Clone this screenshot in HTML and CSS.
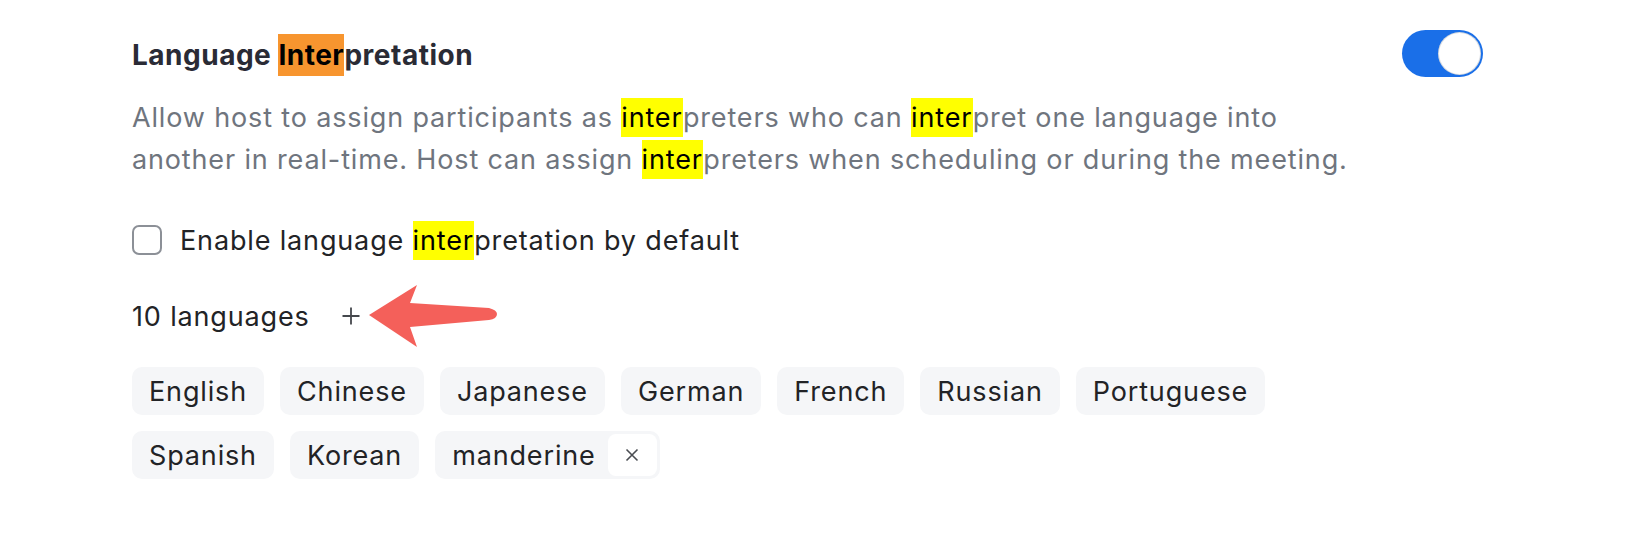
FILE: index.html
```html
<!DOCTYPE html>
<html lang="en">
<head>
<meta charset="utf-8">
<title>Language Interpretation</title>
<link rel="stylesheet" href="styles.css">
</head>
<body>
<section class="setting">
  <div class="setting-head">
    <div class="setting-main">
      <h3 class="title">Language <mark class="hl-orange">Inter</mark>pretation</h3>
      <p class="desc">Allow host to assign participants as <mark class="hl">inter</mark>preters who can <mark class="hl">inter</mark>pret one language into another in real-time. Host can assign <mark class="hl">inter</mark>preters when scheduling or during the meeting.</p>
    </div>
    <button class="toggle" aria-pressed="true"><span class="knob"></span></button>
  </div>

  <label class="check-row"><span class="checkbox"></span><span>Enable language <mark class="hl">inter</mark>pretation by default</span></label>

  <div class="lang-count">
    <span>10 languages</span>
    <span class="plus">
      <svg width="20" height="20" viewBox="0 0 20 20"><path d="M10 1.5v17M1.5 10h17" stroke="#45484d" stroke-width="1.8" fill="none"/></svg>
    </span>
    <svg class="arrow" width="140" height="70" viewBox="0 0 140 70">
      <path d="M4 33 L52 3 L45 21 L124 26 Q132 28 132 32 Q132 37 124 38 L45 45 L52 65 Z" fill="#f4605a"/>
    </svg>
  </div>

  <div class="tags">
    <span class="tag">English</span>
    <span class="tag">Chinese</span>
    <span class="tag">Japanese</span>
    <span class="tag">German</span>
    <span class="tag">French</span>
    <span class="tag">Russian</span>
    <span class="tag">Portuguese</span>
    <span class="tag">Spanish</span>
    <span class="tag">Korean</span>
    <span class="tag tag-removable">manderine<span class="tag-x"><svg width="16" height="16" viewBox="0 0 16 16"><path d="M2.5 2.5l11 11M13.5 2.5l-11 11" stroke="#4a4d52" stroke-width="1.6" fill="none"/></svg></span></span>
  </div>
</section>
</body>
</html>
```

FILE: styles.css
```css
* { box-sizing: border-box; }
html, body { margin: 0; background: #ffffff; }
body {
  font-family: Inter, "Noto Sans", "Liberation Sans", sans-serif;
  color: #222326;
}
.setting {
  width: 1483px;
  padding: 37px 0 0 132px;
}
.setting-head {
  display: flex;
  justify-content: space-between;
  align-items: flex-start;
}
.setting-main { max-width: 1240px; }
.title {
  margin: 0;
  font-size: 28px;
  line-height: 36px;
  font-weight: 700;
  letter-spacing: 0.5px;
  color: #2a2b35;
}
mark { color: #000; }
.hl-orange { background: #f7952f; padding: 4px 0; }
.hl { background: #ffff00; padding: 3px 0; }
.desc {
  margin: 24px 0 0;
  font-size: 27px;
  letter-spacing: 0.85px;
  line-height: 42px;
  color: #6f757e;
}
.toggle {
  margin-top: -7px;
  width: 81px;
  height: 47px;
  border: none;
  border-radius: 24px;
  background: #1a6fe8;
  padding: 3px;
  display: flex;
  justify-content: flex-end;
  align-items: center;
}
.knob {
  width: 41px;
  height: 41px;
  border-radius: 50%;
  background: #fff;
  box-shadow: 0 0 0 1px #d7dbe0;
}
.check-row {
  margin-top: 38px;
  display: flex;
  align-items: center;
  gap: 18px;
  height: 42px;
  font-size: 27px;
  letter-spacing: 0.85px;
  color: #222326;
}
.checkbox {
  width: 30px;
  height: 30px;
  border: 2px solid #8c9097;
  border-radius: 7px;
  background: #fff;
}
.lang-count {
  position: relative;
  margin-top: 34px;
  display: flex;
  align-items: center;
  height: 42px;
  font-size: 27px;
  letter-spacing: 0.85px;
  color: #222326;
}
.plus {
  margin-left: 31px;
  display: flex;
}
.arrow {
  position: absolute;
  left: 233px;
  top: -13px;
}
.tags {
  margin-top: 30px;
  display: flex;
  flex-wrap: wrap;
  gap: 16px 16px;
  max-width: 1200px;
}
.tag {
  display: inline-flex;
  align-items: center;
  height: 48px;
  padding: 0 17px;
  border-radius: 10px;
  background: #f5f6f8;
  font-size: 27px;
  letter-spacing: 0.85px;
  color: #222326;
}
.tag-removable { padding-right: 3px; }
.tag-x {
  margin-left: 12px;
  width: 49px;
  height: 42px;
  border-radius: 8px;
  background: #fff;
  display: flex;
  align-items: center;
  justify-content: center;
}
```
